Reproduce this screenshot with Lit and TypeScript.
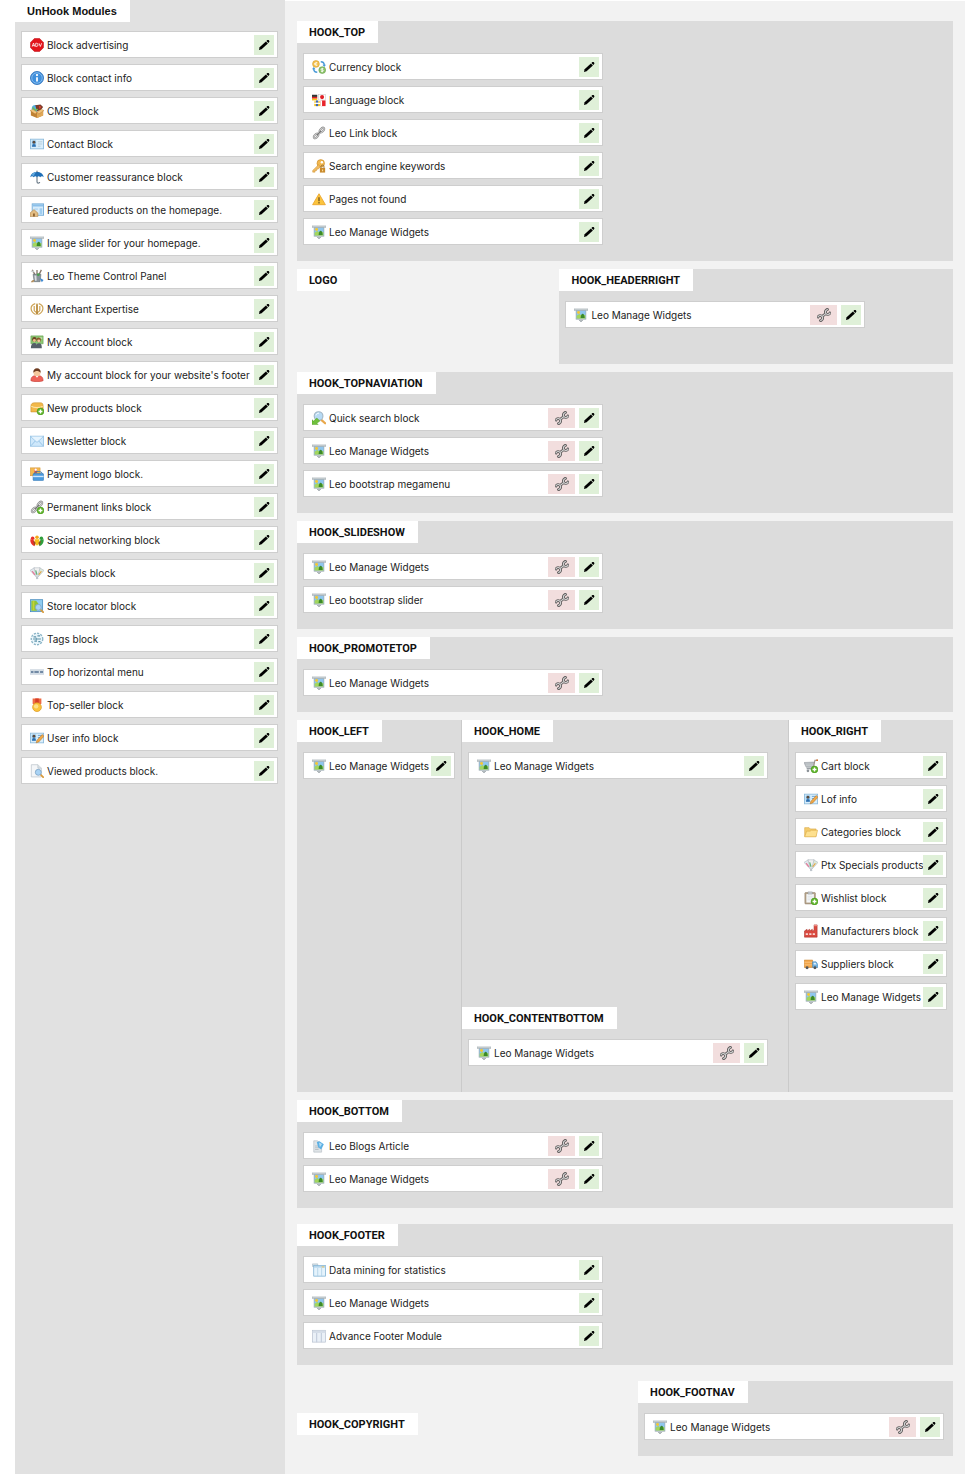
import { LitElement, html, svg, css, nothing, TemplateResult } from "lit";
import { customElement, property } from "lit/decorators.js";

type Item = { icon: string; name: string; config?: boolean };

const plus = svg`<circle cx="12" cy="12" r="3.9" fill="#5fb52a" stroke="#3f8f14" stroke-width=".6"/><path d="M12 9.8v4.4M9.8 12h4.4" stroke="#fff" stroke-width="1.5"/>`;
const lens = svg`<path d="M12 12l3 3" stroke="#d99a3a" stroke-width="2" stroke-linecap="round"/><circle cx="9.5" cy="9.5" r="3.4" fill="#a9d3f5" stroke="#7fa6c8"/>`;
const card = svg`<rect x=".5" y="2.5" width="15" height="11" fill="#d9eefb" stroke="#8dbbdc"/><rect x="2" y="4" width="5" height="7" fill="#8fc3ea"/><circle cx="4.5" cy="6" r="1.6" fill="#5b4a3c"/><path d="M2.3 11c0-2 1-3 2.200-3s2.200 1 2.200 3z" fill="#2d6fb0"/>`;
const chain = svg`<g fill="none" stroke-linecap="round"><g stroke="#868686" stroke-width="2.400"><ellipse cx="11.300" cy="4.700" rx="3.200" ry="1.700" transform="rotate(-48 11.300 4.700)"/><ellipse cx="4.700" cy="11.300" rx="3.200" ry="1.700" transform="rotate(-48 4.700 11.300)"/></g><g stroke="#d2d2d2" stroke-width="1.100"><ellipse cx="11.300" cy="4.700" rx="3.200" ry="1.700" transform="rotate(-48 11.300 4.700)"/><ellipse cx="4.700" cy="11.300" rx="3.200" ry="1.700" transform="rotate(-48 4.700 11.300)"/></g><path d="M6 10l4-4" stroke="#777" stroke-width="1.500"/></g>`;

const ICONS: Record<string, TemplateResult> = {
  widget: svg`<path d="M8 13v2.500M5.500 13.500L8 15.600l2.500-2.100" stroke="#9aa3a8" fill="#d5dadd"/><path d="M2.500 2.500h11v10h-11z" fill="#8fc6ee" stroke="#8aa3b2" stroke-width=".8"/><path d="M3 8.800l3-2 3 2 4-1v4.400H3z" fill="#a3d65e"/><circle cx="5.200" cy="5.200" r="1.700" fill="#f6c732"/><path d="M7.600 11.500c0-3 1-5 2.300-5s2.300 2 2.300 5z" fill="#3c8a2a"/><path d="M0 1h16v1.800H0z" fill="#cdd4d8" stroke="#949ea4" stroke-width=".5"/><path d="M2 12.300h12v1.100H2z" fill="#b9c2c8"/>`,
  ads: svg`<path d="M5 .6h6L15.400 5v6L11 15.400H5L.6 11V5z" fill="#e3141c" stroke="#b80d14" stroke-width=".6"/><path d="M2.500 9.800l1.500-4 1.500 4M3 8.700h2M6.500 6v3.700h1.200c2 0 2-3.700 0-3.700zM10.300 6l1.500 3.700L13.300 6" stroke="#fff" fill="none" stroke-width=".9"/>`,
  info: svg`<circle cx="8" cy="8" r="7.400" fill="#3f8fdc" stroke="#2a6eb8"/><circle cx="8" cy="8" r="6" fill="none" stroke="#9dcbf5" stroke-width=".8"/><path d="M7 7h2v5H7z" fill="#fff"/><circle cx="8" cy="4.600" r="1.300" fill="#fff"/>`,
  cms: svg`<path d="M1 7l7 2.500L15 7v6l-7 3-7-3z" fill="#c08234"/><path d="M8 9.500L15 7v6l-7 3z" fill="#e0a858"/><circle cx="6" cy="5" r="4" fill="#55aee0"/><path d="M6 1.500l6-1 3 3-3 4-4 .500z" fill="#7b3b2a"/><path d="M10 2l3 1-2 3z" fill="#e2452f"/><path d="M3 4l3 3 3-1" stroke="#72c04a" stroke-width="1.500" fill="none"/><path d="M0 7.500L3 6l5 3-2 2.500zM16 7.500L13 6 8 9l2 2.500z" fill="#f0c27a" stroke="#a86f2c" stroke-width=".4"/>`,
  contact: svg`${card}<path d="M9 5.500h5M9 8h5M9 10.500h3" stroke="#b4c9d6"/>`,
  umbrella: svg`<path d="M8 7v6.500c0 2 3 2 3 .2" fill="none" stroke="#6c7b88" stroke-width="1.300"/><path d="M.3 8.200C1 4 4 2.200 8 2.200s7 1.800 7.700 6c-1.200-1.300-3-1.300-4 0-1.200-1.500-2.500-1.500-3.700 0-1.200-1.500-2.500-1.500-3.700 0-1-1.300-2.800-1.300-4 0z" fill="#1f6fb6"/><path d="M4.500 7C5 4.500 6 3 8 2.200 5 2.300 2.300 3.600 1.400 6.600c1-.6 2.200-.5 3.100.4z" fill="#5fa7dd"/><path d="M8 .8v2" stroke="#345"/>`,
  featured: svg`<rect x="2.500" y="1" width="13" height="13" fill="#d6ecfb" stroke="#6fa9d6"/><path d="M3 1.500h12V4H3z" fill="#8cc0ea"/><path d="M11 6h3v7h-3z" fill="#9fcdf0"/><path d="M5 6h4v2H5z" fill="#b9daf4"/><path d="M0 11.500L4.500 7.500 9 11.500V15.500H0z" fill="#e2bd84" stroke="#a67c42" stroke-width=".6"/><path d="M3.500 12h2v3.500h-2z" fill="#8a5e2c"/>`,
  panel: svg`<path d="M2.500 1l3.500 6M13 1l-3 6M8 1v5" stroke="#86776a" stroke-width="1.500"/><path d="M.5 3L4 1l1 3z" fill="#c9ced1"/><path d="M3.500 6h9l-1 8.500H4.800z" fill="#8a949c" stroke="#5c656c" stroke-width=".6"/><path d="M5 7.500h2.300l.3 6H5.700z" fill="#dbe0e3"/><circle cx="9.500" cy="6.500" r="1.600" fill="#4aa04f"/><path d="M11 10l4.500 2.500-2 2.500z" fill="#3d89d2"/><path d="M1 15c1-2 2.500-2.500 4-2.300L4 15z" fill="#b08c5c"/>`,
  expertise: svg`<g fill="none" stroke="#cda457" stroke-width="1.400"><path d="M6 1.800C-.8 4 0 11 6.500 14.200M10 1.800C16.800 4 16 11 9.500 14.200"/><path d="M4.800 4.500v5c0 2 3.200 1.500 3.200 4 0-2.500 3.200-2 3.200-4v-5"/></g><path d="M7 3l1-1.800L9 3v10.500l-1 1.500-1-1.500z" fill="#b88a38"/>`,
  account: svg`<path d="M1 1h14v9H1z" fill="#8cc873" stroke="#5d9748" stroke-width=".6"/><path d="M10 3h4v1h-4z" fill="#e6f5dd"/><circle cx="5" cy="5" r="2.600" fill="#6b4423"/><circle cx="5" cy="6.200" r="1.700" fill="#f0bd8c"/><circle cx="10" cy="5.500" r="2.600" fill="#8b5a2c"/><circle cx="10" cy="6.700" r="1.700" fill="#f3c69b"/><path d="M1 15c0-4 1.500-6 4-6s3 2 3 6zM7 15c0-4 1-5.500 3.300-5.500S13.500 11 13.500 15z" fill="#555f68"/>`,
  user: svg`<path d="M1 14.500C1 10 3.500 8.500 8 8.500s7 1.500 7 6c-3 1.500-11 1.500-14 0z" fill="#ee6258" stroke="#bd3c34" stroke-width=".6"/><circle cx="8" cy="5.500" r="4" fill="#f4c79c"/><path d="M3.800 5.500C3.500 2 5.500.3 8 .3S12.500 2 12.200 5.500C11 4.200 9.500 3.500 8 3.500s-3 .7-4.200 2z" fill="#6d3b20"/><path d="M6.500 9h3L8 11z" fill="#fff"/>`,
  newproducts: svg`<path d="M1 6c0-3 2-4 4-4h7c2 0 3 1 3 4v6.500H1z" fill="#f2b84a" stroke="#c58a24" stroke-width=".6"/><path d="M1.500 6c3 2 10 2 13 0" stroke="#fce3a4" stroke-width="1.300" fill="none"/>${plus}`,
  mail: svg`<rect x=".5" y="2.500" width="15" height="11.500" fill="#cfe8fb" stroke="#9cc6e6"/><path d="M1 3l7 6.500L15 3M1 13.500L6 8M15 13.500L10 8" fill="none" stroke="#8abce2" stroke-width=".9"/><path d="M1.500 3h13L8 8.800z" fill="#e6f4fe"/>`,
  payment: svg`<rect x=".5" y="1" width="11" height="9" fill="#f3b94e" stroke="#d0902a" stroke-width=".6"/><path d="M5 2h3v5H5z" fill="#e15343"/><circle cx="6.500" cy="3" r="1.400" fill="#fff"/><rect x="3.500" y="7.500" width="12" height="8" rx="1" fill="#4a9ade" stroke="#2c71b0" stroke-width=".6"/><path d="M5 7.500c0-3 9-3 9 0" fill="none" stroke="#2c71b0"/><path d="M3.500 10h12v1.600h-12z" fill="#cfe6fa"/>`,
  links: svg`${chain}${plus}`,
  link: chain,
  social: svg`<circle cx="3" cy="6" r="2" fill="#e8302a"/><circle cx="13" cy="6" r="2" fill="#2f9e3c"/><circle cx="8" cy="4.800" r="2" fill="#f4a818"/><path d="M.3 7l3.200.5 3 4L5 15C1.500 13.500.3 11 .3 7z" fill="#e8302a"/><path d="M15.700 7l-3.200.5-3 4L11 15c3.500-1.500 4.700-4 4.700-8z" fill="#2f9e3c"/><path d="M5 7h6l-1.500 7h-3z" fill="#f7c21c"/><path d="M3.500 8.500L6.500 11 5 14.500zM12.500 8.500L9.500 11l1.500 3.500z" fill="#9a4a20"/>`,
  specials: svg`<path d="M0 5l5-3 4 12.500z" fill="#e3e8ee" stroke="#a7b1ba" stroke-width=".6"/><path d="M16 5l-5-3L7.500 14.500z" fill="#dce9dc" stroke="#a7b1ba" stroke-width=".6"/><path d="M4.500 2h7L8 15z" fill="#f1f1f1" stroke="#a7b1ba" stroke-width=".6"/><path d="M2.500 6l3 4" stroke="#e76d8e" stroke-width="1.400"/><path d="M6.500 5l1.500 5" stroke="#5fb07a" stroke-width="1.400"/><path d="M13 6l-3 4" stroke="#e9a23a" stroke-width="1.300"/>`,
  store: svg`<rect x=".5" y=".8" width="14" height="13.700" fill="#8fccf0" stroke="#3d84b8" stroke-width=".8"/><path d="M1.500 2H7l3 4-2 3v4.500H1.500z" fill="#8fc33a"/><path d="M3 2h2v11H3z" fill="#c6d134"/>${lens}`,
  tags: svg`<circle cx="8" cy="8" r="6.600" fill="#eaf6fb" stroke="#8db6c8" stroke-dasharray="2.500 1.300" stroke-width="1.500"/><path d="M4 5.500h3M8.500 4.500h3M3.500 8h2.500M7.500 8h5M5 10.500h3M9.500 11h2.500M7 6.500v3" stroke="#5f93aa" stroke-width="1.300"/>`,
  menu: svg`<path d="M0 5.500h16v5H0z" fill="#dbe4ec"/><path d="M0 5.500h16M0 10.500h16" stroke="#aebccb" stroke-width=".7"/><path d="M1 8h3M5 8h5M11.500 8H15" stroke="#506c8d" stroke-width="1.500"/>`,
  medal: svg`<path d="M3 .5h10v6L8 9 3 6.500z" fill="#ef6a43"/><path d="M6 .5h4V8H6z" fill="#d63e28"/><circle cx="8" cy="10.500" r="5" fill="#fbc43c" stroke="#dc9821" stroke-width=".8"/><circle cx="7" cy="9.500" r="2.500" fill="#fde08a"/>`,
  userinfo: svg`${card}<path d="M9 5h5M9 7.500h3" stroke="#5b9bd0"/><path d="M7 13.500l1-3L14 4l2 2-6 6.500z" fill="#f0a848" stroke="#b37122" stroke-width=".6"/>`,
  viewed: svg`<path d="M1.500.8H9l4 4v10H1.500z" fill="#f4f6f8" stroke="#b9c1c8" stroke-width=".8"/><path d="M9 .8v4h4" fill="#dbe1e6" stroke="#b9c1c8" stroke-width=".8"/>${lens}`,
  currency: svg`<circle cx="4.500" cy="4.500" r="3.900" fill="#f4c350" stroke="#cf962a" stroke-width=".6"/><path d="M6 3H4.500C3 3 3 6 4.500 6H6M2.500 4.500h3" stroke="#fff" fill="none"/><circle cx="11.700" cy="11.500" r="3.900" fill="#8ec46b" stroke="#5c9740" stroke-width=".6"/><path d="M13 10h-2c-1 0-1 1.500 0 1.500h1.200c1 0 1 1.500 0 1.500H10.300M11.700 9v5" stroke="#fff" fill="none" stroke-width=".9"/><path d="M10 2c3 0 4 1.500 4 4M6 14c-3 0-4-1.500-4-4" fill="none" stroke="#4a9ad8" stroke-width="1.700"/><path d="M12 5.500h4L14 8zM0 10.500h4L2 8z" fill="#4a9ad8"/>`,
  language: svg`<path d="M0 2h6v2.500H0z" fill="#333"/><path d="M0 4.500h6v2H0z" fill="#e02020"/><path d="M0 6.500h6v2H0z" fill="#f6c61c"/><rect x="7.500" y="1.500" width="8" height="6.500" fill="#fff" stroke="#c5c5c5" stroke-width=".6"/><circle cx="11.500" cy="4.700" r="2.300" fill="#e01f26"/><path d="M2.500 9.500h7V15h-7z" fill="#f5c52d"/><path d="M4.500 8.500H7V15H4.500z" fill="#3c66b8"/><path d="M2.500 11h7v1.600h-7z" fill="#fff"/><path d="M10 8.500h5.500V15H10z" fill="#e8232a"/><path d="M10 8.500h1.500V15H10z" fill="#fff"/>`,
  key: svg`<circle cx="10" cy="5" r="4.300" fill="#f2b84f" stroke="#c98a28" stroke-width=".7"/><circle cx="11.300" cy="3.800" r="1.400" fill="#fff"/><path d="M7.500 6.500L.8 13v2h2.700v-1.700h1.700v-1.700h1.700L9.500 9z" fill="#f0bb62" stroke="#c98a28" stroke-width=".5"/><rect x="9" y="10" width="6" height="5.500" fill="#c98a2c"/><path d="M10.300 10V8.500c0-2 3.400-2 3.400 0V10" fill="none" stroke="#8e6a34"/><path d="M11.500 12h1.200v2h-1.200z" fill="#fbe0a0"/>`,
  warning: svg`<path d="M8 2L15.300 14.500H.7z" fill="#fbc43e" stroke="#eba52c" stroke-width="1" stroke-linejoin="round"/><path d="M8 6v4.500" stroke="#6d5222" stroke-width="1.500"/><circle cx="8" cy="12.400" r=".9" fill="#6d5222"/>`,
  search: svg`<path d="M10 9.500l5 4.500" stroke="#e8a84c" stroke-width="2.600" stroke-linecap="round"/><circle cx="7.500" cy="5.800" r="5" fill="#b7daf4" stroke="#9fb4c4" stroke-width="1.200"/><path d="M4.500 5c.5-2 2-2.500 3.500-2.500" stroke="#fff" fill="none"/><path d="M0 15.500V10l1.800 1.500L5.500 8 9 11.500 5.500 14l1.500 1.500z" fill="#6fc03c" stroke="#479a1c" stroke-width=".5"/>`,
  cart: svg`<path d="M0 4l11.500-.5-1 6H2.500z" fill="#b4babf" stroke="#9aa0a5" stroke-width=".7"/><path d="M2 5.800h9M2.300 7.600h8.500" stroke="#d4d8da" stroke-width=".6"/><path d="M10.500 11l2-9.500H16" fill="none" stroke="#9a8f86" stroke-width="1.200"/><path d="M14 1.500h2" stroke="#d6702e" stroke-width="1.800"/><path d="M3 11h7" stroke="#9aa0a5" stroke-width="1.600"/><circle cx="4.500" cy="13.500" r="1.500" fill="#8b9197"/>${plus}`,
  folder: svg`<path d="M.8 3h5l1.500 1.500h6.500V13H.8z" fill="#f4cb6c" stroke="#d9a843" stroke-width=".7"/><path d="M.8 13.500L3 7h4l1.200-1h7.300L13.700 13.500z" fill="#fde08f" stroke="#dcae4a" stroke-width=".7"/>`,
  wishlist: svg`<rect x="1" y="1.800" width="12" height="13" rx=".8" fill="#b5a48c" stroke="#8d7c64" stroke-width=".6"/><rect x="2.700" y="3.500" width="8.600" height="9.700" fill="#f5f7f8"/><path d="M4.500 1h5v2.500h-5z" fill="#c8cdd1" stroke="#8b9196" stroke-width=".5"/><path d="M4 6h6M4 8h6M4 10h4" stroke="#d5dbe0" stroke-width=".8"/>${plus}`,
  factory: svg`<path d="M.5 15V8l3-2v2l3-2v2l3-2v2l2-1V1H15v14z" fill="#da4a40" stroke="#a92f28" stroke-width=".6"/><path d="M2 10.500h2.500v2H2zM6 10.500h2.500v2H6zM10 10.500h2.500v2H10z" fill="#f7d6d2"/><path d="M11.500 1H15v1.500h-3.500z" fill="#f08d85"/>`,
  truck: svg`<path d="M.3 3.500h9.500v8.500H.3z" fill="#f2a548" stroke="#c67b22" stroke-width=".6"/><path d="M.6 6h9M.6 9h9" stroke="#fbd19a" stroke-width=".7"/><path d="M9.800 5.500h4l2 3V12H9.800z" fill="#6fb1e0" stroke="#407fae" stroke-width=".6"/><path d="M11 6.500h2.300l1.200 2H11z" fill="#dff0fb"/><circle cx="3.500" cy="12.300" r="1.700" fill="#555"/><circle cx="12.500" cy="12.300" r="1.700" fill="#555"/>`,
  blog: svg`<path d="M2 2h4l5 3.500V15H2z" fill="#dfe4e7" stroke="#b4bcc2" stroke-width=".7"/><path d="M3.500 8h5M3.500 10h5M3.500 12h4" stroke="#a1abb2" stroke-width=".7"/><path d="M5.500 3.500l3-1 5 3.500-3 6-3.500-2.500z" fill="#5cb0e4"/><path d="M8 4l3.500 1.800L9 9.500" fill="#b4ddf6"/>`,
  stats: svg`<path d="M.5 1h6v3h-6z" fill="#d8e1e8" stroke="#9fb2c0" stroke-width=".6"/><rect x="2" y="3" width="13.500" height="12" fill="#e5f3fc" stroke="#6fa8cf" stroke-width=".8"/><path d="M2.300 3.300h13v2h-13z" fill="#b4d5ec"/><path d="M11 4h3v1h-3z" fill="#f2c14a"/><path d="M6.500 5.700V15M11 5.700V15" stroke="#a7cbe3" stroke-width=".8"/>`,
  footer: svg`<rect x=".5" y="1.500" width="15" height="13.500" fill="#eaf0f7" stroke="#b7c1cf" stroke-width=".8"/><path d="M.8 2h14.500v2.500H.8z" fill="#d5dde8"/><path d="M5.300 4.500V15M10.700 4.500V15" stroke="#c5cfde" stroke-width="1.400"/>`,
};

const WRENCH = "M10.300 1.400C8.300 2.300 7.900 4.100 9 5.500s2.900 1.300 4-.4M3.700 12.600c2-.9 2.400-2.700 1.300-4.100s-2.900-1.300-4 .4M9 5.500L5 8.500";

const LW = "Leo Manage Widgets";

const UNHOOKED: Item[] = [
  ["ads", "Block advertising"], ["info", "Block contact info"], ["cms", "CMS Block"],
  ["contact", "Contact Block"], ["umbrella", "Customer reassurance block"],
  ["featured", "Featured products on the homepage."], ["widget", "Image slider for your homepage."],
  ["panel", "Leo Theme Control Panel"], ["expertise", "Merchant Expertise"],
  ["account", "My Account block"], ["user", "My account block for your website's footer"],
  ["newproducts", "New products block"], ["mail", "Newsletter block"], ["payment", "Payment logo block."],
  ["links", "Permanent links block"], ["social", "Social networking block"], ["specials", "Specials block"],
  ["store", "Store locator block"], ["tags", "Tags block"], ["menu", "Top horizontal menu"],
  ["medal", "Top-seller block"], ["userinfo", "User info block"], ["viewed", "Viewed products block."],
].map(([icon, name]) => ({ icon, name }));

@customElement("module-item")
export class ModuleItem extends LitElement {
  @property({ attribute: false }) item!: Item;

  static styles = css`
    :host { display: block; width: 100%; max-width: 300px; }
    .item {
      display: flex; align-items: center; box-sizing: border-box; height: 27px;
      padding: 0 3px 0 8px; border: 1px solid #cecece; background: #fff;
    }
    .icon { flex: none; width: 14px; height: 14px; margin-right: 3px; }
    .name { flex: 1 1 0; min-width: 0; white-space: nowrap; font-size: 10px; line-height: 16px; color: #222; }
    .action {
      flex: none; display: grid; place-items: center; width: 20px; height: 20px;
      padding: 0; border: 0; background: #dff0d8; cursor: pointer;
    }
    .config { width: 27px; margin-right: 4px; background: #f2dede; }
    .glyph { width: 14px; height: 14px; }
  `;

  render() {
    const { icon, name, config } = this.item;
    return html`<div class="item">
      <svg class="icon" viewBox="0 0 16 16" aria-hidden="true">${ICONS[icon]}</svg>
      <span class="name">${name}</span>
      ${config
        ? html`<button class="action config" type="button" aria-label="Configure ${name}">
            <svg class="glyph" viewBox="0 0 14 14" fill="none" stroke-linecap="square" aria-hidden="true">
              <path d=${WRENCH} stroke="#5f5c5c" stroke-width="2.800"/>
              <path d=${WRENCH} stroke="#d3d3d3" stroke-width="1.100"/>
            </svg>
          </button>`
        : nothing}
      <button class="action" type="button" aria-label="Edit ${name}">
        <svg class="glyph" viewBox="0 0 14 14" aria-hidden="true">
          <path d="M2 12l.6-2.800 6.300-5.800 2 2-6.300 5.900z" fill="#000"/>
          <path d="M9.400 3l1-.9c.4-.3.900-.3 1.200 0l.6.600c.3.400.3.800 0 1.200l-.9 1z" fill="#000"/>
        </svg>
      </button>
    </div>`;
  }
}

@customElement("hook-zone")
export class HookZone extends LitElement {
  @property() label = "";
  @property({ attribute: false }) items: Item[] = [];

  static styles = css`
    :host { display: block; box-sizing: border-box; min-width: 0; background: #dcdcdc; }
    .label {
      width: fit-content; margin: 0; padding: 2px 13px 0 12px; background: #fff; color: #111;
      font: bold 11px/20px Roboto, "Liberation Sans", sans-serif;
    }
    .list { display: flex; flex-direction: column; gap: 6px; margin: 0; padding: 10px 6px 16px; list-style: none; }
  `;

  render() {
    return html`<h2 class="label">${this.label}</h2>
      ${this.items.length
        ? html`<ul class="list">${this.items.map((i) => html`<li><module-item .item=${i}></module-item></li>`)}</ul>`
        : nothing}`;
  }
}

@customElement("app-root")
export class AppRoot extends LitElement {
  static styles = css`
    :host { display: block; background: #fff; font-family: Inter, "Liberation Sans", sans-serif; }
    .page { display: flex; padding: 0 15px 3px; }
    .unhooked { flex: 0 0 270px; min-width: 0; background: #e1e1e1; }
    .heading {
      width: fit-content; margin: 0; padding: 0 13px 0 12px; background: #fff; color: #111;
      font: bold 11px/22px "Liberation Sans", Arial, sans-serif;
    }
    .list { display: flex; flex-direction: column; gap: 6px; margin: 0; padding: 9px 7px 16px 6px; list-style: none; }
    .layout {
      flex: 1; min-width: 0; display: flex; flex-direction: column; gap: 8px;
      margin-top: 1px; padding: 20px 12px 18px; background: #f2f2f2;
    }
    .header { display: grid; grid-template-columns: 2fr 3fr; min-height: 95px; }
    .columns { display: grid; grid-template-columns: 1fr 2fr 1fr; }
    .center {
      display: flex; flex-direction: column; min-width: 0;
      border: solid #cacaca; border-width: 0 1px;
    }
    .home { flex: 1; min-height: 287px; }
    .below { min-height: 85px; }
    .bottom { margin-bottom: 8px; }
    .closing { display: grid; grid-template-columns: 52fr 48fr; align-items: start; margin-top: 8px; }
    .bare { background: none; }
    .copyright { margin-top: 32px; }
  `;

  render() {
    const zone = (label: string, items: Item[] = [], cls = "") =>
      html`<hook-zone class=${cls} .label=${label} .items=${items}></hook-zone>`;
    const w = (config = false): Item => ({ icon: "widget", name: LW, config });
    return html`<div class="page">
      <aside class="unhooked">
        <h1 class="heading">UnHook Modules</h1>
        <ul class="list">${UNHOOKED.map((i) => html`<li><module-item .item=${i}></module-item></li>`)}</ul>
      </aside>
      <main class="layout">
        ${zone("HOOK_TOP", [
          { icon: "currency", name: "Currency block" }, { icon: "language", name: "Language block" },
          { icon: "link", name: "Leo Link block" }, { icon: "key", name: "Search engine keywords" },
          { icon: "warning", name: "Pages not found" }, w(),
        ])}
        <div class="header">${zone("LOGO", [], "bare")}${zone("HOOK_HEADERRIGHT", [w(true)])}</div>
        ${zone("HOOK_TOPNAVIATION", [
          { icon: "search", name: "Quick search block", config: true }, w(true),
          { icon: "widget", name: "Leo bootstrap megamenu", config: true },
        ])}
        ${zone("HOOK_SLIDESHOW", [w(true), { icon: "widget", name: "Leo bootstrap slider", config: true }])}
        ${zone("HOOK_PROMOTETOP", [w(true)])}
        <div class="columns">
          ${zone("HOOK_LEFT", [w()])}
          <div class="center">${zone("HOOK_HOME", [w()], "home")}${zone("HOOK_CONTENTBOTTOM", [w(true)], "below")}</div>
          ${zone("HOOK_RIGHT", [
            { icon: "cart", name: "Cart block" }, { icon: "userinfo", name: "Lof info" },
            { icon: "folder", name: "Categories block" }, { icon: "specials", name: "Ptx Specials products" },
            { icon: "wishlist", name: "Wishlist block" }, { icon: "factory", name: "Manufacturers block" },
            { icon: "truck", name: "Suppliers block" }, w(),
          ])}
        </div>
        ${zone("HOOK_BOTTOM", [{ icon: "blog", name: "Leo Blogs Article", config: true }, w(true)], "bottom")}
        ${zone("HOOK_FOOTER", [
          { icon: "stats", name: "Data mining for statistics" }, w(),
          { icon: "footer", name: "Advance Footer Module" },
        ])}
        <div class="closing">${zone("HOOK_COPYRIGHT", [], "bare copyright")}${zone("HOOK_FOOTNAV", [w(true)])}</div>
      </main>
    </div>`;
  }
}
